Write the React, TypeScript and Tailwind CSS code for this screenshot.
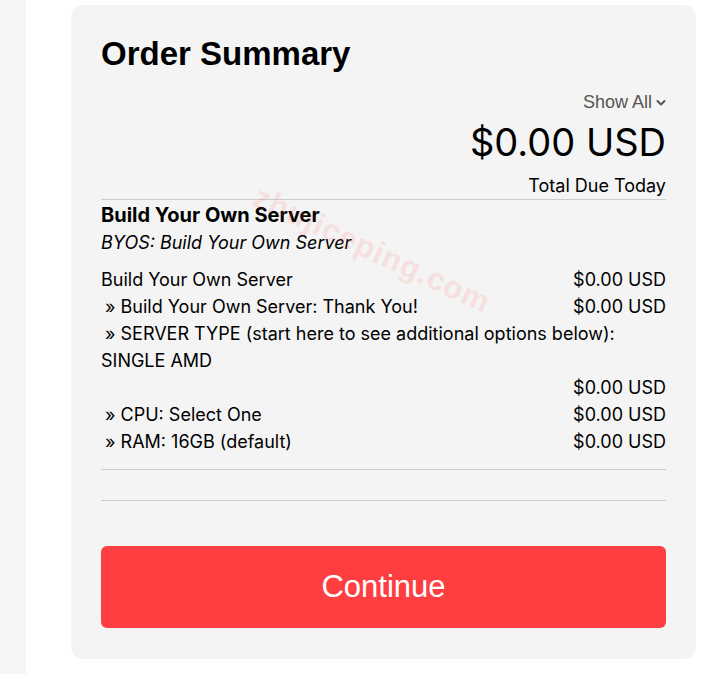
const rows = [
  { label: "Build Your Own Server", price: "$0.00 USD", sub: false },
  { label: "» Build Your Own Server: Thank You!", price: "$0.00 USD", sub: true },
  {
    label: "» SERVER TYPE (start here to see additional options below): SINGLE AMD",
    price: "$0.00 USD",
    sub: true,
  },
  { label: "» CPU: Select One", price: "$0.00 USD", sub: true },
  { label: "» RAM: 16GB (default)", price: "$0.00 USD", sub: true },
];

const OrderSummary = () => {
  return (
    <div className="relative w-[625px] rounded-xl bg-[#f4f4f4] px-[30px] pt-[30px] pb-[31px] overflow-hidden">
      <h2 className="font-['Liberation_Sans',Arial,sans-serif] text-[33px] leading-[38px] font-bold text-black">
        Order Summary
      </h2>

      <div className="mt-[17px] flex justify-end items-center gap-1 font-['Liberation_Sans',Arial,sans-serif] text-[18px] leading-[24px] text-[#555]">
        <span>Show All</span>
        <svg className="w-[10px] h-[10px] mt-[1px]" viewBox="0 0 10 10" fill="none">
          <path d="M1.5 3l3.5 3.5L8.5 3" stroke="#555" strokeWidth="2" strokeLinecap="round" strokeLinejoin="round" />
        </svg>
      </div>

      <div className="font-['Inter',sans-serif] text-black text-right">
        <div className="mt-[6px] text-[38px] leading-[44px]">$0.00 USD</div>
        <div className="mt-[10px] text-[18px] leading-[24px]">Total Due Today</div>
      </div>

      <div className="mt-[1px] border-t border-[#cccccc]" />

      <div className="font-['Inter',sans-serif] text-black">
        <div className="mt-[3px] text-[20px] leading-[25px] font-bold">Build Your Own Server</div>
        <div className="mt-[3px] text-[18px] leading-[24px] italic">BYOS: Build Your Own Server</div>

        <div className="mt-[11px] text-[18px] leading-[27px]">
          {rows.map((row, i) => (
            <div key={i} className="flex flex-wrap justify-between">
              <span className={row.sub ? "indent-[4px]" : ""}>{row.label}</span>
              <span className="ml-auto">{row.price}</span>
            </div>
          ))}
        </div>
      </div>

      <div className="mt-[14px] border-t border-[#cccccc]" />
      <div className="mt-[30px] border-t border-[#cccccc]" />

      <button className="mt-[45px] w-full h-[82px] rounded-md bg-[#ff3e42] text-white font-['Liberation_Sans',Arial,sans-serif] text-[31px]">
        Continue
      </button>

      {/* watermark */}
      <div className="pointer-events-none absolute left-[172px] top-[222px] rotate-[25deg] font-['Liberation_Sans',Arial,sans-serif] font-bold text-[31px] text-[#ff4d4d] opacity-[0.12] tracking-[1px]">
        zhujiceping.com
      </div>
    </div>
  );
};

export default function App() {
  return (
    <div className="flex w-[722px] h-[674px] bg-white overflow-hidden">
      <div className="w-[26px] shrink-0 bg-[#f5f5f5]" />
      <div className="pl-[45px] pt-[5px]">
        <OrderSummary />
      </div>
    </div>
  );
}
